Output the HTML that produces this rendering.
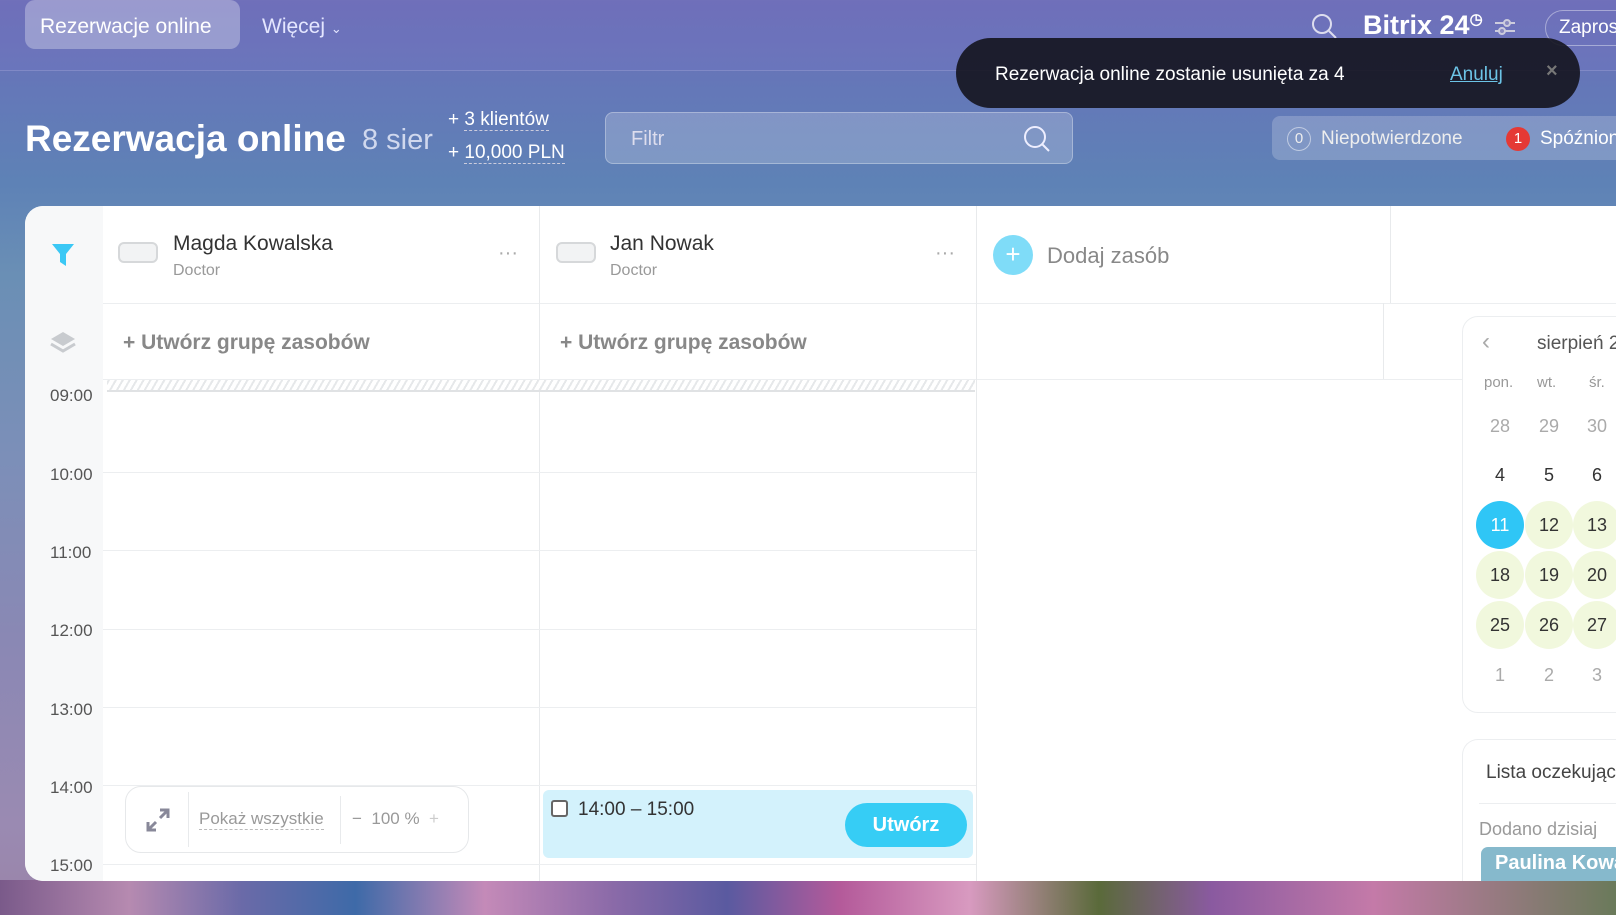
<!DOCTYPE html>
<html style="width:1616px;height:915px;overflow:hidden"><head><meta charset="utf-8"><style>
*{margin:0;padding:0;box-sizing:border-box}
body{width:1616px;height:915px;overflow:hidden;position:relative;font-family:"Liberation Sans",sans-serif;
background:linear-gradient(180deg,#6c6cb6 0%,#6478b8 10%,#5e82b6 20%,#6a8fb5 30%,#7c8fb8 50%,#8a88b4 70%,#9a8ab2 90%,#9a84a8 100%)}
.abs{position:absolute}
.flowers{left:0;top:880px;width:1616px;height:35px;background:linear-gradient(90deg,#7a5a8a,#b68ab0 8%,#6a6aa8 15%,#3e6aa8 22%,#c48ab8 30%,#8a6aa8 38%,#5a5aa0 45%,#b45a9a 52%,#d89ac0 60%,#5a6a3a 68%,#8a5aa0 75%,#c47aa8 85%,#6a7a5a 100%)}
.card{left:25px;top:206px;width:1591px;height:675px;background:#fff;border-radius:18px 0 0 18px}
.vl{background:#e8eaec;width:1px}
.hl{background:#eceef0;height:1px}
.t{color:#333}
.hour{font-size:17px;color:#555;left:50px}
.cal span{position:absolute;width:48px;height:48px;border-radius:50%;text-align:center;line-height:48px;font-size:18px;color:#333}
</style></head><body>
<div class="abs flowers"></div>
<div class="abs" style="left:0;top:0;width:1616px;height:71px;background:rgba(120,120,200,.25);border-bottom:1px solid rgba(255,255,255,.15)"></div>
<div class="abs" style="left:25px;top:0;width:215px;height:49px;background:rgba(255,255,255,.3);border-radius:10px"></div>
<div class="abs" style="left:40px;top:15px;font-size:21px;color:#fff">Rezerwacje online</div>
<div class="abs" style="left:262px;top:15px;font-size:21px;color:#e4e6ff">Więcej <span style="font-size:13px">&#8964;</span></div>
<svg class="abs" style="left:1310px;top:12px" width="28" height="28"><circle cx="12" cy="12" r="9" stroke="#dde" stroke-width="2" fill="none"/><line x1="19" y1="19" x2="26" y2="26" stroke="#dde" stroke-width="2"/></svg>
<div class="abs" style="left:1363px;top:10px;font-size:27px;font-weight:bold;color:#fff;white-space:nowrap">Bitrix 24<span style="font-size:15px;vertical-align:top">&#9719;</span></div>
<svg class="abs" style="left:1494px;top:17px" width="22" height="20"><path d="M1 6h20M1 14h20" stroke="#ccd" stroke-width="2"/><circle cx="13" cy="6" r="3" fill="#8a8ac0" stroke="#ccd" stroke-width="2"/><circle cx="8" cy="14" r="3" fill="#8a8ac0" stroke="#ccd" stroke-width="2"/></svg>
<div class="abs" style="left:1545px;top:10px;width:90px;height:36px;border:1px solid rgba(255,255,255,.4);border-radius:18px;color:#fff;font-size:19px;padding:6px 13px">Zapros</div>
<div class="abs" style="left:956px;top:38px;width:624px;height:70px;background:rgba(20,20,30,.9);border-radius:35px"></div>
<div class="abs" style="left:995px;top:64px;font-size:19px;color:#fff">Rezerwacja online zostanie usunięta za 4</div>
<div class="abs" style="left:1450px;top:64px;font-size:19px;color:#6cc4e6;text-decoration:underline">Anuluj</div>
<div class="abs" style="left:1546px;top:60px;font-size:20px;color:#777;font-weight:bold">×</div>
<div class="abs" style="left:25px;top:118px;font-size:37px;font-weight:bold;color:#fff">Rezerwacja online</div>
<div class="abs" style="left:362px;top:124px;font-size:29px;color:#d0d8ee">8 sier</div>
<div class="abs" style="left:448px;top:109px;font-size:19px;color:#fff">+ <span style="border-bottom:1px dashed #ccd">3 klientów</span></div>
<div class="abs" style="left:448px;top:142px;font-size:19px;color:#fff">+ <span style="border-bottom:1px dashed #ccd">10,000 PLN</span></div>
<div class="abs" style="left:605px;top:112px;width:468px;height:52px;background:rgba(255,255,255,.2);border:1px solid rgba(255,255,255,.3);border-radius:8px"></div>
<div class="abs" style="left:631px;top:128px;font-size:20px;color:#dde">Filtr</div>
<svg class="abs" style="left:1022px;top:124px" width="30" height="30"><circle cx="13" cy="13" r="10" stroke="#eef" stroke-width="2" fill="none"/><line x1="20" y1="20" x2="27" y2="27" stroke="#eef" stroke-width="2"/></svg>
<div class="abs" style="left:1272px;top:116px;width:360px;height:44px;background:rgba(255,255,255,.2);border-radius:8px"></div>
<div class="abs" style="left:1287px;top:127px;width:24px;height:24px;border-radius:50%;border:1px solid rgba(255,255,255,.5);color:#eee;font-size:15px;text-align:center;line-height:22px">0</div>
<div class="abs" style="left:1321px;top:128px;font-size:19px;color:#eee">Niepotwierdzone</div>
<div class="abs" style="left:1506px;top:127px;width:24px;height:24px;border-radius:50%;background:#e53935;color:#fff;font-size:15px;text-align:center;line-height:24px">1</div>
<div class="abs" style="left:1540px;top:128px;font-size:19px;color:#fff;white-space:nowrap">Spóźnion</div>

<div class="abs card"></div>
<div class="abs" style="left:25px;top:206px;width:78px;height:675px;background:#f7f8f9;border-radius:18px 0 0 18px"></div>
<svg class="abs" style="left:51px;top:242px" width="24" height="26"><path d="M1 2h22l-8 10v12l-6-4v-8z" fill="#3bc8f5"/></svg>
<svg class="abs" style="left:49px;top:330px" width="28" height="24"><path d="M14 2l12 7-12 7-12-7z" fill="#c8cbcf"/><path d="M2 14l12 7 12-7" stroke="#c8cbcf" stroke-width="3" fill="none"/></svg>
<div class="abs hl" style="left:103px;top:303px;width:1513px"></div>
<div class="abs hl" style="left:103px;top:379px;width:1360px"></div>
<div class="abs vl" style="left:539px;top:206px;height:675px"></div>
<div class="abs vl" style="left:976px;top:206px;height:675px"></div>
<div class="abs vl" style="left:1390px;top:206px;height:97px"></div>
<div class="abs vl" style="left:1383px;top:303px;height:76px"></div>
<div class="abs" style="left:107px;top:380px;width:868px;height:12px;background:repeating-linear-gradient(-60deg,#fff 0 4px,#e6e8ea 4px 6px);border-bottom:2px solid #e0e2e4"></div>
<div class="abs" style="left:118px;top:242px;width:40px;height:21px;border:2px solid #d6d8da;border-radius:6px;background:#f2f3f4"></div>
<div class="abs t" style="left:173px;top:232px;font-size:21px">Magda Kowalska</div>
<div class="abs" style="left:173px;top:262px;font-size:16px;color:#999">Doctor</div>
<div class="abs" style="left:498px;top:242px;color:#aaa;font-size:20px">···</div>
<div class="abs" style="left:556px;top:242px;width:40px;height:21px;border:2px solid #d6d8da;border-radius:6px;background:#f2f3f4"></div>
<div class="abs t" style="left:610px;top:232px;font-size:21px">Jan Nowak</div>
<div class="abs" style="left:610px;top:262px;font-size:16px;color:#999">Doctor</div>
<div class="abs" style="left:935px;top:242px;color:#aaa;font-size:20px">···</div>
<div class="abs" style="left:993px;top:235px;width:40px;height:40px;border-radius:50%;background:#7fdcf8;color:#fff;font-size:26px;text-align:center;line-height:38px">+</div>
<div class="abs" style="left:1047px;top:243px;font-size:22px;color:#888">Dodaj zasób</div>
<div class="abs" style="left:123px;top:331px;font-size:21px;color:#888;font-weight:bold">+ Utwórz grupę zasobów</div>
<div class="abs" style="left:560px;top:331px;font-size:21px;color:#888;font-weight:bold">+ Utwórz grupę zasobów</div>
<div class="abs hl" style="left:103px;top:472px;width:873px"></div>
<div class="abs hl" style="left:103px;top:550px;width:873px"></div>
<div class="abs hl" style="left:103px;top:629px;width:873px"></div>
<div class="abs hl" style="left:103px;top:707px;width:873px"></div>
<div class="abs hl" style="left:103px;top:785px;width:873px"></div>
<div class="abs hl" style="left:103px;top:864px;width:873px"></div>
<div class="abs hour" style="top:386px">09:00</div>
<div class="abs hour" style="top:465px">10:00</div>
<div class="abs hour" style="top:543px">11:00</div>
<div class="abs hour" style="top:621px">12:00</div>
<div class="abs hour" style="top:700px">13:00</div>
<div class="abs hour" style="top:778px">14:00</div>
<div class="abs hour" style="top:856px">15:00</div>
<div class="abs" style="left:125px;top:786px;width:344px;height:67px;border:1px solid #e6e8ea;border-radius:16px;background:#fff"></div>
<div class="abs vl" style="left:188px;top:792px;height:55px"></div>
<div class="abs vl" style="left:340px;top:796px;height:48px"></div>
<svg class="abs" style="left:144px;top:806px" width="28" height="28"><path d="M16 4h8v8M24 4l-8 8M12 24H4v-8M4 24l8-8" stroke="#889" stroke-width="3" fill="none"/></svg>
<div class="abs" style="left:199px;top:809px;font-size:17px;color:#999;border-bottom:1px dashed #bbb">Pokaż wszystkie</div>
<div class="abs" style="left:352px;top:809px;font-size:17px;color:#999">−&nbsp; 100 % &nbsp;<span style="color:#ccc">+</span></div>
<div class="abs" style="left:543px;top:790px;width:430px;height:68px;background:#d3f2fc;border-radius:6px"></div>
<div class="abs" style="left:551px;top:800px;width:17px;height:17px;border:2px solid #666;border-radius:3px;background:#fff"></div>
<div class="abs t" style="left:578px;top:799px;font-size:19px">14:00 – 15:00</div>
<div class="abs" style="left:845px;top:803px;width:122px;height:44px;border-radius:22px;background:#36cdf5;color:#fff;font-size:20px;font-weight:bold;text-align:center;line-height:44px">Utwórz</div>
<div class="abs" style="left:1462px;top:316px;width:200px;height:397px;border:1px solid #eceef0;border-radius:16px;background:#fff"></div>
<div class="abs" style="left:1482px;top:328px;font-size:24px;color:#aaa">‹</div>
<div class="abs" style="left:1537px;top:333px;font-size:19px;color:#555;white-space:nowrap">sierpień 2</div>
<div class="abs cal">
<div class="abs" style="left:1484px;top:374px;font-size:15px;color:#999">pon.</div>
<div class="abs" style="left:1537px;top:374px;font-size:15px;color:#999">wt.</div>
<div class="abs" style="left:1589px;top:374px;font-size:15px;color:#999">śr.</div>
<span style="left:1476px;top:402px;color:#aaa">28</span><span style="left:1525px;top:402px;color:#aaa">29</span><span style="left:1573px;top:402px;color:#aaa">30</span>
<span style="left:1476px;top:451px">4</span><span style="left:1525px;top:451px">5</span><span style="left:1573px;top:451px">6</span>
<span style="left:1476px;top:501px;background:#2fc6f6;color:#fff">11</span><span style="left:1525px;top:501px;background:#f1f8dd">12</span><span style="left:1573px;top:501px;background:#f1f8dd">13</span>
<span style="left:1476px;top:551px;background:#f1f8dd">18</span><span style="left:1525px;top:551px;background:#f1f8dd">19</span><span style="left:1573px;top:551px;background:#f1f8dd">20</span>
<span style="left:1476px;top:601px;background:#f1f8dd">25</span><span style="left:1525px;top:601px;background:#f1f8dd">26</span><span style="left:1573px;top:601px;background:#f1f8dd">27</span>
<span style="left:1476px;top:651px;color:#aaa">1</span><span style="left:1525px;top:651px;color:#aaa">2</span><span style="left:1573px;top:651px;color:#aaa">3</span>
</div>
<div class="abs" style="left:1462px;top:739px;width:154px;height:142px;border:1px solid #eceef0;border-bottom:none;border-right:none;border-radius:16px 0 0 0;background:#fff"></div>
<div class="abs" style="left:1486px;top:762px;font-size:19px;color:#444;white-space:nowrap">Lista oczekując</div>
<div class="abs hl" style="left:1479px;top:803px;width:137px"></div>
<div class="abs" style="left:1479px;top:819px;font-size:18px;color:#999;white-space:nowrap">Dodano dzisiaj</div>
<div class="abs" style="left:1481px;top:847px;width:135px;height:34px;background:#86b9cc;border-radius:7px 0 0 0;color:#fff;font-size:20px;font-weight:bold;padding:5px 14px;white-space:nowrap;overflow:hidden">Paulina Kowa</div>
</body></html>
